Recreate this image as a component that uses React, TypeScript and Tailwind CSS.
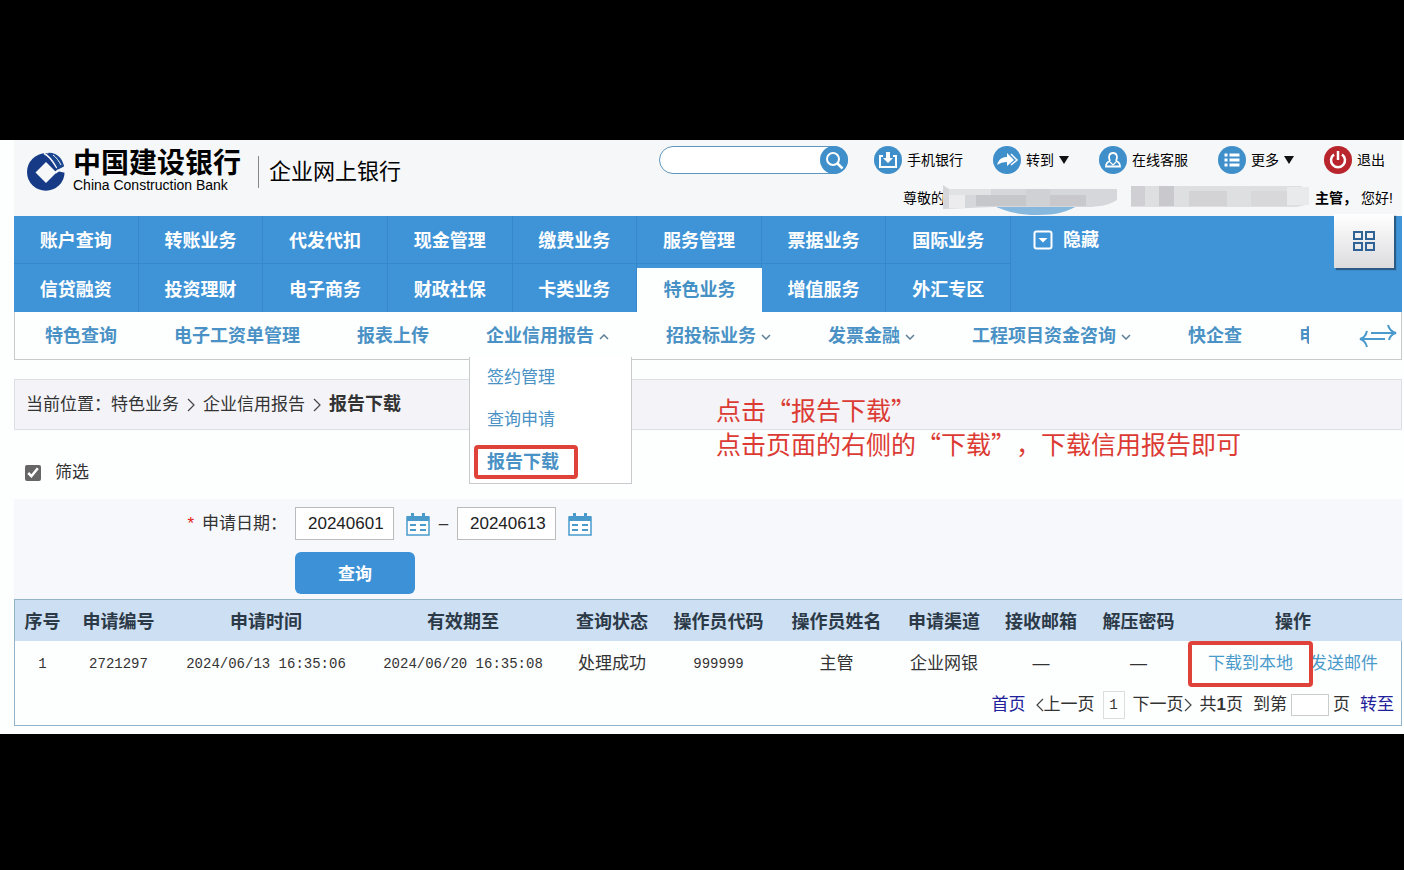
import { clsx } from 'clsx';
import type { ReactNode } from 'react';

type NavItem = { label: string; active?: boolean };
type SubItem = { label: string; caret?: 'up' | 'down'; menu?: string[] };

const NAV: NavItem[] = [
  { label: '账户查询' },
  { label: '转账业务' },
  { label: '代发代扣' },
  { label: '现金管理' },
  { label: '缴费业务' },
  { label: '服务管理' },
  { label: '票据业务' },
  { label: '国际业务' },
  { label: '信贷融资' },
  { label: '投资理财' },
  { label: '电子商务' },
  { label: '财政社保' },
  { label: '卡类业务' },
  { label: '特色业务', active: true },
  { label: '增值服务' },
  { label: '外汇专区' },
];

const SUB_NAV: SubItem[] = [
  { label: '特色查询' },
  { label: '电子工资单管理' },
  { label: '报表上传' },
  { label: '企业信用报告', caret: 'up', menu: ['签约管理', '查询申请', '报告下载'] },
  { label: '招投标业务', caret: 'down' },
  { label: '发票金融', caret: 'down' },
  { label: '工程项目资金咨询', caret: 'down' },
  { label: '快企查' },
];

const COLUMNS = [
  { title: '序号', width: 'w-[55px]' },
  { title: '申请编号', width: 'w-[97px]' },
  { title: '申请时间', width: 'w-[198px]' },
  { title: '有效期至', width: 'w-[196px]' },
  { title: '查询状态', width: 'w-[102px]' },
  { title: '操作员代码', width: 'w-[111px]' },
  { title: '操作员姓名', width: 'w-[125px]' },
  { title: '申请渠道', width: 'w-[90px]' },
  { title: '接收邮箱', width: 'w-[104px]' },
  { title: '解压密码', width: 'w-[91px]' },
  { title: '操作', width: 'w-[218px]' },
];

const ROW = [
  '1',
  '2721297',
  '2024/06/13 16:35:06',
  '2024/06/20 16:35:08',
  '处理成功',
  '999999',
  '主管',
  '企业网银',
  '—',
  '—',
];

export default function App() {
  return (
    <div
      lang="zh-CN"
      className="min-h-screen bg-black pb-[136px] pt-[140px] font-['Liberation_Sans','Noto_Sans_CJK_SC',sans-serif] text-[#333]"
    >
      <div className="bg-[#fdfefe] pb-2 pl-3.5 pr-0.5">
        <Header />
        <MainNav />
        <SubNav />
        <Breadcrumb />
        <Filter />
        <Results />
      </div>
    </div>
  );
}

function Header() {
  return (
    <header className="flex h-[76px] items-start justify-between bg-[#f6f7f9] pl-3">
      <div className="flex items-center pt-3">
        <BankMark />
        <div className="ml-[7px] w-[185px] whitespace-nowrap text-black">
          <div className="text-[28px] font-bold leading-6">中国建设银行</div>
          <div className="pt-0.5 text-[14px] leading-[14px]">China Construction Bank</div>
        </div>
        <span className="h-8 w-px bg-[#888]" />
        <span className="pl-2.5 text-[22px] leading-8 text-black">企业网上银行</span>
      </div>

      <div className="flex flex-col items-end gap-2.5 pt-1.5 text-[14px] leading-7 text-black">
        <div className="flex items-center gap-[30px] pr-[17px]">
          <div className="-mr-1 flex h-7 w-[189px] items-center justify-between rounded-full border border-[#5f96bb] bg-white">
            <input aria-label="搜索" className="h-6 w-36 rounded-full bg-transparent pl-3 outline-none" />
            <button type="button" aria-label="搜索" className="-mr-px">
              <Disc>
                <circle cx="13" cy="13" r="6" />
                <path d="M17.500 17.500l5 5" strokeWidth="2.500" />
              </Disc>
            </button>
          </div>
          <Tool label="手机银行">
            <path d="M9 10H6v11h16V10h-3" strokeWidth="2" />
            <path d="M12 6h4v6h3l-5 5-5-5h3z" fill="#fff" stroke="none" />
          </Tool>
          <Tool label="转到" caret>
            <path d="M4 19c2-6 5-8 10-8V7l7 7-7 6v-4c-4 0-7 1-10 3z" fill="#fff" stroke="none" />
            <path d="M18 8l6 6-6 5" strokeWidth="1.500" />
          </Tool>
          <Tool label="在线客服">
            <path d="M11 15c-2-4-1-8 3-8s5 4 3 8M11 15c-3 1-4 3-4 5.500h14c0-2.500-1-4.500-4-5.500" strokeWidth="1.800" />
            <path d="M11 16l3 3 3-3" strokeWidth="1.200" />
          </Tool>
          <Tool label="更多" caret>
            <path d="M6.500 9h3M6.500 14h3M6.500 19h3M11.500 9h10M11.500 14h10M11.500 19h10" strokeWidth="3" />
          </Tool>
          <Tool label="退出" red>
            <path d="M10 8.500a7 7 0 1 0 8 0M14 5v9" strokeWidth="2.500" />
          </Tool>
        </div>

        <div className="flex items-center pr-[9px]">
          <span>尊敬的</span>
          <RedactedName />
          <strong className="pl-1.5 pr-1">主管，</strong>
          <span>您好!</span>
        </div>
      </div>
    </header>
  );
}

function BankMark() {
  return (
    <svg viewBox="0 0 40 40" className="h-10 w-10 shrink-0" aria-hidden>
      <circle cx="19.800" cy="20" r="18.800" fill="#163a86" />
      <path d="M9.500 20.500 20 10l10.500 10.500L20 31z" fill="#f6f7f9" />
      {/* opening of the ring on the right */}
      <path d="M28 20.500l3.500-3 8.500-4v7.500l-7-1.500-3 2z" fill="#f6f7f9" />
      <path d="M18 1.500c5 2 9 8 13 14.500" fill="none" stroke="#f6f7f9" strokeWidth="1.600" />
      <path d="M22 1c7-1 14 4 16 13l-6 3.500C29 11 26 5 22 1z" fill="#1b4790" />
      <path d="M27 3c3 2 6 6 8 10" fill="none" stroke="#f6f7f9" strokeWidth="1" />
    </svg>
  );
}

function Disc({ children, red }: { children: ReactNode; red?: boolean }) {
  return (
    <svg viewBox="0 0 28 28" className="h-7 w-7 shrink-0" fill="none" stroke="#fff" strokeWidth="2" aria-hidden>
      <circle cx="14" cy="14" r="14" fill={red ? '#b9252c' : '#3f8fcb'} stroke="none" />
      {children}
    </svg>
  );
}

function Tool({
  label,
  caret,
  red,
  children,
}: {
  label: string;
  caret?: boolean;
  red?: boolean;
  children: ReactNode;
}) {
  return (
    <a href="#" className="flex items-center gap-[5px]">
      <Disc red={red}>{children}</Disc>
      <span>{label}</span>
      {caret ? (
        <svg viewBox="0 0 10 8" className="h-2 w-2.5" aria-hidden>
          <path d="M0 0h10L5 8z" fill="#111" />
        </svg>
      ) : null}
    </a>
  );
}

// Customer name is masked with mosaic blocks
function RedactedName() {
  return (
    <svg viewBox="0 0 368 28" className="-my-1 -ml-1 h-7 w-[368px] overflow-visible" aria-hidden>
      <path d="M50 20h90c-14 8-24 11-44 11s-34-4-46-11z" fill="#86b8de" />
      <path d="M2 1l6 4h168v11c-8 5-18 7-30 7H52L2 25z" fill="#d6d7da" />
      <path d="M8 5h42v6H8z" fill="#e1e2e4" />
      <path d="M8 11h16v13H8z" fill="#ececee" />
      <path d="M35 11h50v11H35z" fill="#c6c7ca" />
      <path d="M85 5h24v17H85z" fill="#d0d1d4" />
      <path d="M109 11h36v11h-36z" fill="#c9c9cd" />
      <path d="M190 2h170l8 5v13l-12 3H190z" fill="#dedfe1" />
      <path d="M190 2h14v20h-14z" fill="#d0d0d4" />
      <path d="M218 2h15v20h-15z" fill="#c9c9cd" />
      <path d="M248 7h38v15h-38z" fill="#d3d3d6" />
      <path d="M310 7h36v15h-36z" fill="#d8d8db" />
      <path d="M346 3h22v18h-22z" fill="#e9eaec" />
    </svg>
  );
}

function MainNav() {
  return (
    <nav className="relative grid grid-cols-[997fr_391fr] bg-[#3f94d8] text-[18px] font-bold text-white">
      <ul className="grid grid-cols-8">
        {NAV.map((item, i) => (
          <li
            key={item.label}
            className={clsx('flex h-12 border-r border-[#3788cb]', i < 8 && 'border-b')}
          >
            <a
              href="#"
              className={clsx(
                'flex flex-1 items-center justify-center',
                item.active ? 'mt-1 -mr-px bg-[#fdfefe] text-[#4590c4]' : 'pt-1',
              )}
            >
              {item.label}
            </a>
          </li>
        ))}
      </ul>
      <button type="button" className="flex h-12 items-center gap-2.5 self-start pl-[22px]">
        <svg viewBox="0 0 20 20" className="h-5 w-5" aria-hidden>
          <rect x="1.500" y="1.500" width="17" height="17" rx="2" fill="none" stroke="#fff" strokeWidth="2" />
          <path d="M5.500 8h9L10 12.500z" fill="#fff" />
        </svg>
        隐藏
      </button>
      <button
        type="button"
        aria-label="应用"
        className="absolute -top-0.5 right-2 flex h-[54px] w-[60px] items-center justify-center bg-linear-to-b from-white to-[#dcdcdf] shadow-[2px_2px_1px_#2c5a86]"
      >
        <svg viewBox="0 0 22 20" className="h-5 w-[22px]" fill="none" stroke="#2f6396" strokeWidth="2" aria-hidden>
          <path d="M1 1h8v7H1zM13 1h8v7h-8zM1 12h8v7H1zM13 12h8v7h-8z" />
        </svg>
      </button>
    </nav>
  );
}

function SubNav() {
  return (
    <div className="flex h-12 items-center border border-t-0 border-[#c8cacd] pl-[30px] pr-1">
      <ul className="flex h-full min-w-0 flex-1 items-center gap-[57px] text-[18px] font-bold text-[#4a92c5]">
        {SUB_NAV.map((item) => (
          <li key={item.label} className="relative flex h-full shrink-0 items-center">
            <a href="#" className="flex items-center gap-[5px] pt-0.5">
              {item.label}
              {item.caret ? (
                <svg viewBox="0 0 10 6" className="h-1.5 w-2.5" fill="none" stroke="#5f7f96" strokeWidth="1.500" aria-hidden>
                  <path d={item.caret === 'up' ? 'M1 5l4-4 4 4' : 'M1 1l4 4 4-4'} />
                </svg>
              ) : null}
            </a>
            {item.menu ? <Dropdown items={item.menu} /> : null}
          </li>
        ))}
        <li className="w-2.5 overflow-hidden whitespace-nowrap pt-0.5">电</li>
      </ul>
      <button type="button" aria-label="滚动">
        <svg viewBox="0 0 38 24" className="h-6 w-[38px]" fill="none" stroke="#4a9acb" strokeWidth="2" aria-hidden>
          <path d="M12 9h24M29 1c1 4 4 7 8 8-4 1-6 3-7 7" />
          <path d="M26 15H2M8 7c-1 4-3 7-7 8 4 1 6 4 7 8" />
        </svg>
      </button>
    </div>
  );
}

function Dropdown({ items }: { items: string[] }) {
  return (
    <ul className="absolute -left-[17px] top-full z-10 -mt-0.5 w-[163px] border border-t-0 border-[#c8cacd] bg-white text-[17px] font-normal">
      {items.map((label, i) => (
        <li key={label} className="flex h-[42px] items-center pl-1">
          <a
            href="#"
            className={clsx(
              'flex h-[34px] items-center rounded-sm border-4 px-[9px]',
              i === 2 ? 'border-[#df4238] pr-[15px] text-[18px] font-bold' : 'border-transparent',
            )}
          >
            {label}
          </a>
        </li>
      ))}
    </ul>
  );
}

function Breadcrumb() {
  return (
    <div className="relative mt-[19px] flex h-[51px] items-center border border-[#dedfe4] bg-[#f3f3f8] pl-[11px] text-[17px]">
      <span>当前位置：</span>
      <span>特色业务</span>
      <Chevron className="mx-2" />
      <span>企业信用报告</span>
      <Chevron className="mx-2" />
      <strong className="text-[18px]">报告下载</strong>
      <p className="absolute left-[701px] top-3 whitespace-nowrap font-['Noto_Sans_CJK_SC',sans-serif] text-[25px] leading-[34px] text-[#dc3b34] [text-spacing-trim:space-all]">
        点击“报告下载”
        <br />
        点击页面的右侧的“下载”，下载信用报告即可
      </p>
    </div>
  );
}

function Chevron({ left, className }: { left?: boolean; className?: string }) {
  return (
    <svg
      viewBox="0 0 8 14"
      className={clsx('h-3.5 w-2', className)}
      fill="none"
      stroke="#444"
      strokeWidth="1.200"
      aria-hidden
    >
      <path d={left ? 'M7 1L1 7l6 6' : 'M1 1l6 6-6 6'} />
    </svg>
  );
}

function Filter() {
  return (
    <form>
      <label className="flex h-[69px] items-center gap-3.5 pl-[11px] pt-4 text-[17px]">
        <input type="checkbox" defaultChecked className="h-4 w-4 accent-[#666]" />
        筛选
      </label>
      <div className="grid h-[100px] grid-cols-[281px_1fr] content-start gap-y-3 bg-[#f7f8fc] pt-2 text-[17px]">
        <label htmlFor="date-from" className="flex items-center justify-end gap-2 pr-2">
          <span className="text-[#e02020]">*</span>
          申请日期：
        </label>
        <div className="flex items-center">
          <DateInput id="date-from" value="20240601" label="开始日期" />
          <span className="w-[27px] text-center">–</span>
          <DateInput id="date-to" value="20240613" label="结束日期" />
        </div>
        <button
          type="button"
          className="col-start-2 h-[42px] w-[120px] rounded-md bg-[#3d91d6] pt-1 text-[17px] font-bold text-white"
        >
          查询
        </button>
      </div>
    </form>
  );
}

function DateInput({ id, value, label }: { id: string; value: string; label: string }) {
  return (
    <div className="flex items-center gap-3">
      <input
        id={id}
        aria-label={label}
        defaultValue={value}
        className="h-[33px] w-[99px] border border-[#bbb] bg-white pl-3 text-[17px] text-[#222]"
      />
      <button type="button" aria-label="选择日期">
        <svg viewBox="0 0 24 24" className="h-6 w-6" fill="none" stroke="#4a9acb" strokeWidth="1.500" aria-hidden>
          <path d="M1 5h22v18H1z" fill="#fff" />
          <path d="M1 4h22v5H1z" fill="#4a9acb" stroke="none" />
          <path d="M6.500 1v5M17.500 1v5" strokeWidth="3" />
          <path d="M4 13h6M14 13h6M4 18h6M14 18h6" strokeWidth="2" />
        </svg>
      </button>
    </div>
  );
}

function Results() {
  return (
    <section className="border border-[#93b3ca]">
      <table className="w-full table-fixed text-center">
        <thead>
          <tr className="h-[41px] bg-[#cddff3] text-[18px] text-[#2c3a48]">
            {COLUMNS.map((col) => (
              <th key={col.title} className={clsx('whitespace-nowrap p-0 pt-1 font-bold', col.width)}>
                {col.title}
              </th>
            ))}
          </tr>
        </thead>
        <tbody>
          <tr className="h-11 text-[17px]">
            {ROW.map((cell, i) => (
              <td
                key={i}
                className={clsx(
                  'whitespace-nowrap p-0 pt-0.5',
                  /^\d/.test(cell) && "font-['Liberation_Mono',monospace] text-[14px]",
                )}
              >
                {cell}
              </td>
            ))}
            <td className="whitespace-nowrap p-0 pt-0.5 text-[#4a9acb]">
              <div className="flex justify-center gap-[17px]">
                <a href="#" className="relative">
                  下载到本地
                  <span className="pointer-events-none absolute -inset-x-5 -inset-y-2.5 rounded-sm border-4 border-[#df4238]" />
                </a>
                <a href="#">发送邮件</a>
              </div>
            </td>
          </tr>
        </tbody>
      </table>

      <div className="flex h-10 items-center justify-end pr-[7px] text-[17px] leading-6">
        <a href="#" className="text-[#21219b]">
          首页
        </a>
        <a href="#" className="ml-2.5 flex items-center">
          <Chevron left />
          上一页
        </a>
        <span className="mx-2 flex h-7 w-[22px] items-center justify-center border border-[#ddd] font-['Liberation_Mono',monospace] text-[14px]">
          1
        </span>
        <a href="#" className="mr-2 flex items-center">
          下一页
          <Chevron />
        </a>
        <span>
          共<strong>1</strong>页
        </span>
        <label htmlFor="page-no" className="ml-2.5">
          到第
        </label>
        <input id="page-no" className="mx-1 h-[22px] w-[38px] border border-[#ccc] bg-white" />
        <span>页</span>
        <a href="#" className="ml-2.5 text-[#21219b]">
          转至
        </a>
      </div>
    </section>
  );
}
